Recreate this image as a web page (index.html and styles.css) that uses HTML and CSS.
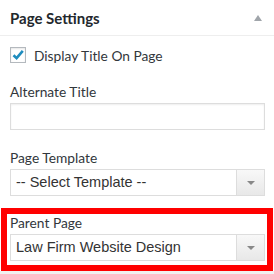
FILE: index.html
```html
<!DOCTYPE html>
<html lang="en">
<head>
  <meta charset="UTF-8">
  <title>Page Settings</title>
  <link rel="stylesheet" href="styles.css">
</head>
<body>
  <div class="panel">
    <div class="panel-header">
      <h2>Page Settings</h2>
      <span class="toggle"></span>
    </div>

    <div class="panel-body">
      <label class="check-row">
        <span class="checkbox">
          <svg viewBox="0 0 16 16" width="16" height="16">
            <path d="M3.5 8.2 L6.6 11.2 L12.8 3.8" fill="none" stroke="#1e8cbe" stroke-width="2.6"></path>
          </svg>
        </span>
        Display Title On Page
      </label>

      <div class="field">
        <div class="field-label">Alternate Title</div>
        <div class="text-input"></div>
      </div>

      <div class="field">
        <div class="field-label">Page Template</div>
        <div class="select">
          <span class="select-value">-- Select Template --</span>
          <span class="select-arrow"><span class="caret"></span></span>
        </div>
      </div>

      <!-- highlighted field -->
      <div class="field highlight">
        <div class="field-label">Parent Page</div>
        <div class="select">
          <span class="select-value">Law Firm Website Design</span>
          <span class="select-arrow"><span class="caret"></span></span>
        </div>
      </div>
    </div>
  </div>
</body>
</html>
```

FILE: styles.css
```css
body {
  margin: 0;
  padding: 0;
  background-color: #f1f1f1;
  font-family: Lato, "Open Sans", sans-serif;
  color: #32373c;
}

.panel {
  width: 274px;
  height: 271px;
  background-color: #fff;
  overflow: hidden;
}

.panel-header {
  height: 35px;
  border-bottom: 1px solid #eee;
  display: flex;
  align-items: center;
  justify-content: space-between;
  padding: 0 12px 0 10px;
}

.panel-header h2 {
  margin: 0;
  font-size: 15px;
  font-weight: 700;
  color: #23282d;
}

.toggle {
  width: 0;
  height: 0;
  border-left: 4px solid transparent;
  border-right: 4px solid transparent;
  border-bottom: 6px solid #a0a5aa;
  margin-top: 1px;
}

.panel-body {
  padding: 11px 9px 0 10px;
}

.check-row {
  display: flex;
  align-items: center;
  gap: 8px;
  height: 16px;
  font-size: 13.75px;
}

.checkbox {
  width: 14px;
  height: 14px;
  border: 1px solid #b4b9be;
  box-shadow: inset 0 1px 2px rgba(0, 0, 0, 0.1);
  position: relative;
}

.checkbox svg {
  position: absolute;
  left: -1px;
  top: -1px;
}

.field {
  margin-top: 20px;
}

.field + .field {
  margin-top: 19px;
}

.field-label {
  font-size: 13.75px;
  line-height: 18px;
  margin-bottom: 2px;
}

.text-input {
  height: 25px;
  border: 1px solid #ddd;
  box-shadow: inset 0 1px 2px rgba(0, 0, 0, 0.07);
}

.select {
  height: 25px;
  border: 1px solid #ddd;
  display: flex;
  font-family: "Liberation Sans", Arial, sans-serif;
  font-size: 14.5px;
  color: #333;
}

.select-value {
  flex: 1;
  padding-left: 5px;
  line-height: 25px;
}

.select-arrow {
  width: 27px;
  border-left: 1px solid #ddd;
  background: linear-gradient(#f8f8f8, #e8e8e8);
  display: flex;
  align-items: center;
  justify-content: center;
}

.caret {
  width: 0;
  height: 0;
  border-left: 4px solid transparent;
  border-right: 4px solid transparent;
  border-top: 4px solid #888;
}

.field.highlight {
  margin: 12px -8px 0 -9px;
  border: 6px solid #ff0000;
  padding: 0 2px 4px 3px;
}
```
